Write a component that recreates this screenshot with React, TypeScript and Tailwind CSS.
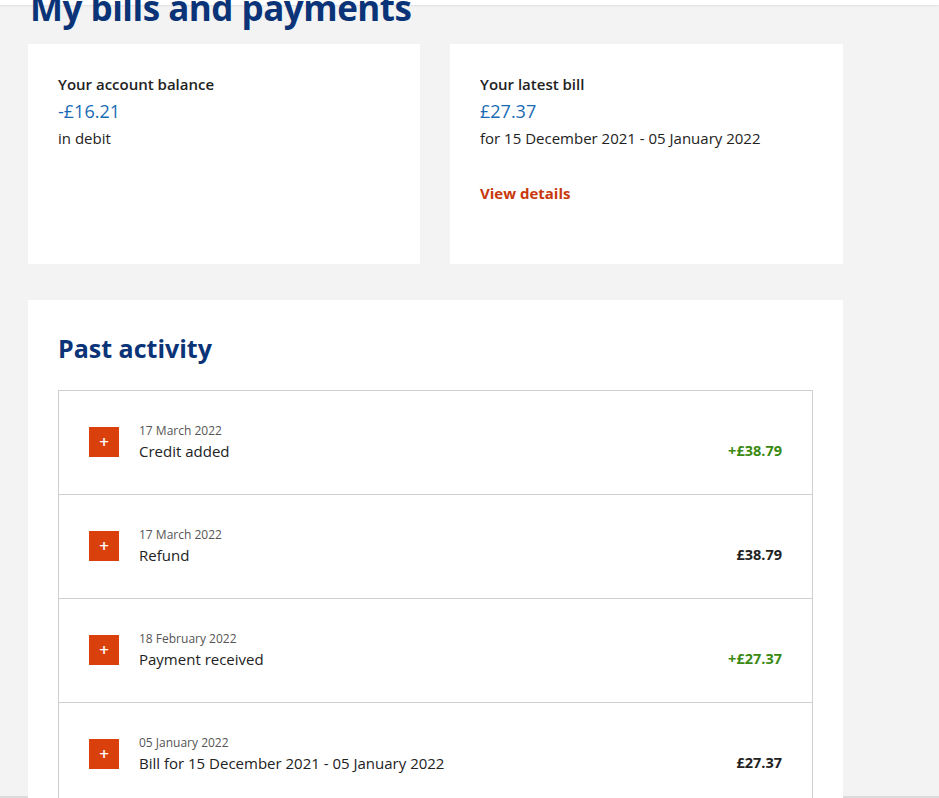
import React from "react";

const rows = [
  { date: "17 March 2022", title: "Credit added", amount: "+£38.79", green: true },
  { date: "17 March 2022", title: "Refund", amount: "£38.79", green: false },
  { date: "18 February 2022", title: "Payment received", amount: "+£27.37", green: true },
  { date: "05 January 2022", title: "Bill for 15 December 2021 - 05 January 2022", amount: "£27.37", green: false },
];

export default function App() {
  return (
    <div
      className="relative h-[798px] w-[939px] overflow-hidden bg-[#f3f3f3] text-[#222]"
      style={{ fontFamily: '"Open Sans", "Noto Sans", sans-serif' }}
    >
      <div className="absolute left-0 top-0 h-[5px] w-full bg-white shadow-[0_1px_2px_rgba(0,0,0,0.08)]" />
      <div className="relative z-10 flex flex-col pl-[28px]">
        <h1 className="ml-[2px] mt-[-17px] h-[61px] text-[35px] font-bold leading-[50px] tracking-[-0.5px] text-[#0b3478]">
          My bills and payments
        </h1>
        <div className="flex gap-[30px]">
          <div className="flex h-[220px] w-[392px] flex-col bg-white px-[30px] pt-[28px]">
            <div className="text-[15px] font-semibold leading-[24px]">Your account balance</div>
            <div className="text-[18px] leading-[30px] text-[#1a6bb5]">-£16.21</div>
            <div className="text-[15px] leading-[24px]">in debit</div>
          </div>
          <div className="flex h-[220px] w-[393px] flex-col bg-white px-[30px] pt-[28px]">
            <div className="text-[15px] font-semibold leading-[24px]">Your latest bill</div>
            <div className="text-[18px] leading-[30px] text-[#1a6bb5]">£27.37</div>
            <div className="text-[15px] leading-[24px]">for 15 December 2021 - 05 January 2022</div>
            <div className="mt-[31px] text-[15px] font-bold leading-[24px] text-[#c8380c]">View details</div>
          </div>
        </div>
        <div className="mt-[36px] flex w-[815px] flex-col bg-white px-[30px] pt-[30px]">
          <h2 className="text-[25px] font-bold leading-[36px] text-[#0b3478]">Past activity</h2>
          <div className="mt-[24px] border-x border-t border-[#cfcfcf]">
            {rows.map((r, i) => (
              <div
                key={i}
                className="flex h-[104px] items-center border-b border-[#cfcfcf] px-[30px] pb-[2px]"
              >
                <div className="flex h-[30px] w-[30px] items-center justify-center bg-[#d9400c] text-[17px] font-semibold leading-none text-white">
                  +
                </div>
                <div className="ml-[20px] flex flex-1 flex-col">
                  <div className="text-[12px] leading-[18px] text-[#555]">{r.date}</div>
                  <div className="text-[15px] leading-[22px]">{r.title}</div>
                </div>
                <div
                  className={`pt-[18px] text-[14.5px] font-bold leading-[22px] ${r.green ? "text-[#3a8a12]" : "text-[#222]"}`}
                >
                  {r.amount}
                </div>
              </div>
            ))}
          </div>
        </div>
      </div>
      <div className="absolute bottom-0 left-0 h-[2px] w-full bg-[#dcdcdc]" />
    </div>
  );
}
